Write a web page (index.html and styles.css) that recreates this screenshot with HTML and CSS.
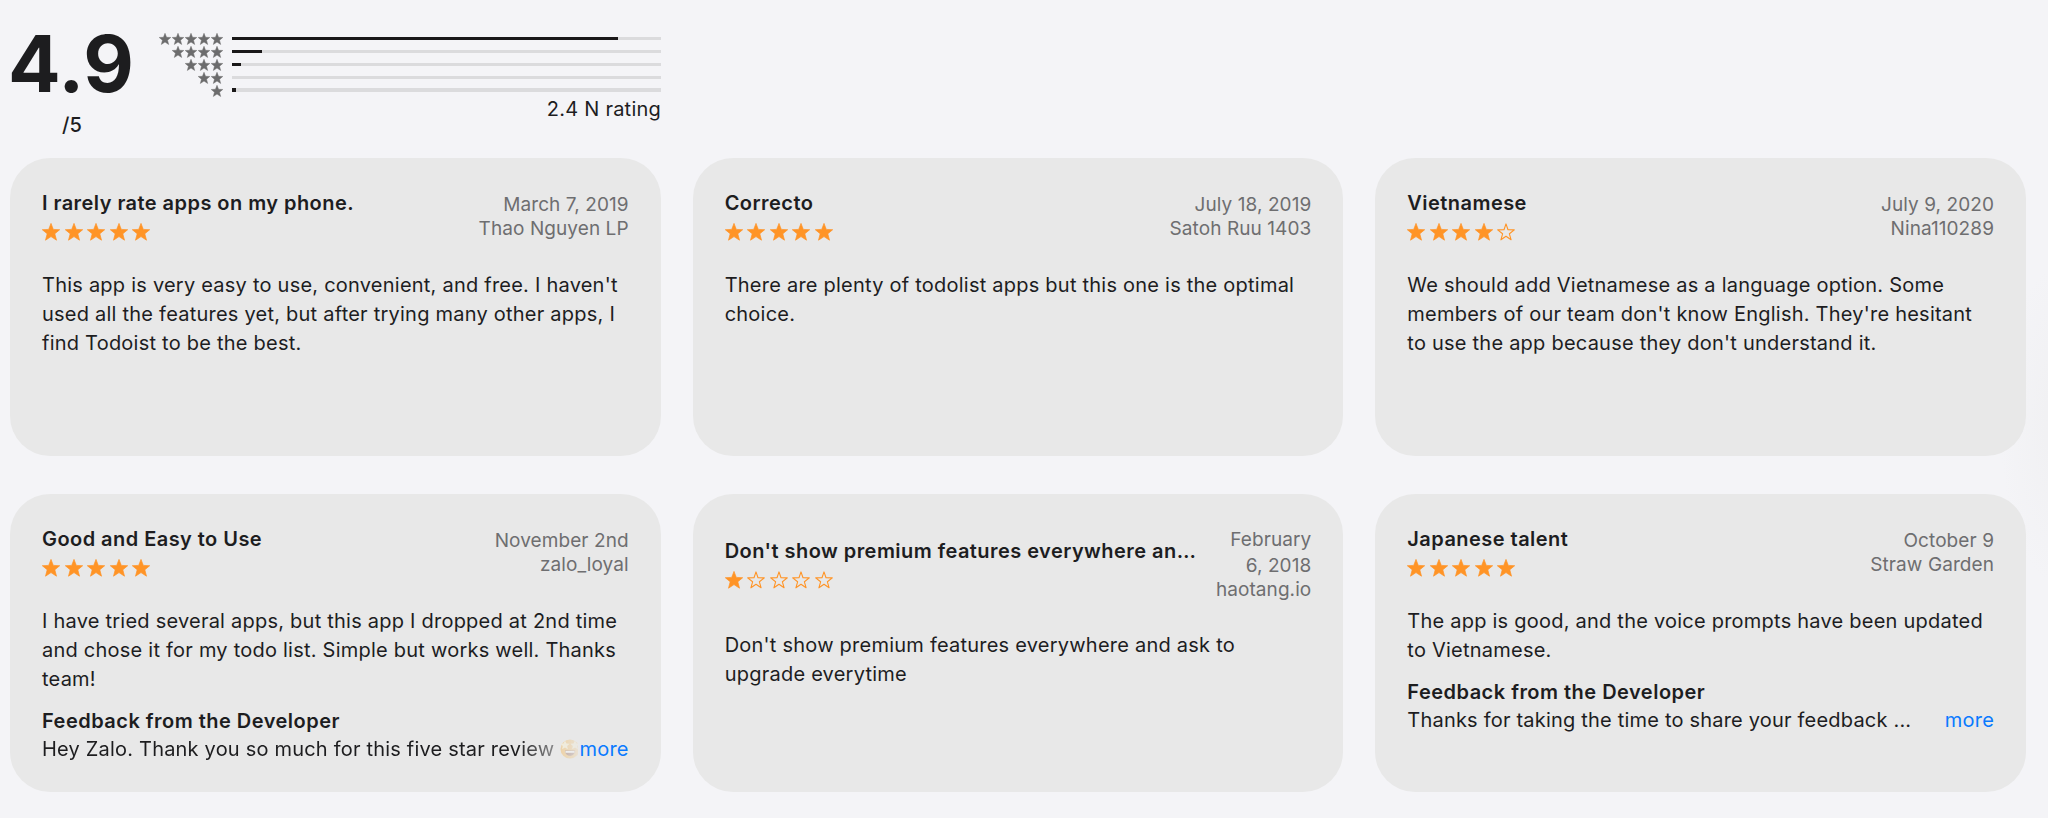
FILE: index.html
```html
<!DOCTYPE html>
<html lang="en">
<head>
    <meta charset="UTF-8">
    <title>Ratings and Reviews</title>
    <link rel="stylesheet" href="styles.css">
</head>
<body>
    <svg class="sprite" aria-hidden="true">
        <symbol id="star" viewBox="0 0 18 18">
            <path stroke="currentColor" stroke-width=".7" stroke-linejoin="round" d="M9 .4 11.3 6.4 17.7 6.7 12.8 10.8 14.5 17.2 9 13.6 3.5 17.2 5.2 10.8 .3 6.7 6.7 6.4Z"/>
        </symbol>
        <symbol id="star-o" viewBox="0 0 18 18">
            <path fill="none" stroke="currentColor" stroke-width="1.1" stroke-linejoin="round" d="M9 .9 11 6.7 17.3 6.9 12.4 10.8 14.1 16.8 9 13.3 3.9 16.8 5.6 10.8 .7 6.9 7 6.7Z"/>
        </symbol>
    </svg>

    <div class="summary">
        <div class="score">
            <div class="score-value">4.9</div>
            <div class="score-max">/5</div>
        </div>
        <div class="histogram">
            <div class="histogram-row">
                <div class="mini-stars"><svg><use href="#star"/></svg><svg><use href="#star"/></svg><svg><use href="#star"/></svg><svg><use href="#star"/></svg><svg><use href="#star"/></svg></div>
                <div class="bar"><div class="bar-fill" style="width: 90%"></div></div>
            </div>
            <div class="histogram-row">
                <div class="mini-stars"><svg><use href="#star"/></svg><svg><use href="#star"/></svg><svg><use href="#star"/></svg><svg><use href="#star"/></svg></div>
                <div class="bar"><div class="bar-fill" style="width: 7%"></div></div>
            </div>
            <div class="histogram-row">
                <div class="mini-stars"><svg><use href="#star"/></svg><svg><use href="#star"/></svg><svg><use href="#star"/></svg></div>
                <div class="bar"><div class="bar-fill" style="width: 2%"></div></div>
            </div>
            <div class="histogram-row">
                <div class="mini-stars"><svg><use href="#star"/></svg><svg><use href="#star"/></svg></div>
                <div class="bar"><div class="bar-fill" style="width: 0%"></div></div>
            </div>
            <div class="histogram-row">
                <div class="mini-stars"><svg><use href="#star"/></svg></div>
                <div class="bar bar-last"><div class="bar-fill" style="width: 1%"></div></div>
            </div>
            <div class="rating-count">2.4 N rating</div>
        </div>
    </div>

    <div class="reviews">
        <div class="card">
            <div class="card-header">
                <div class="heading">
                    <h3>I rarely rate apps on my phone.</h3>
                    <div class="stars"><svg><use href="#star"/></svg><svg><use href="#star"/></svg><svg><use href="#star"/></svg><svg><use href="#star"/></svg><svg><use href="#star"/></svg></div>
                </div>
                <div class="meta">
                    <div class="date">March 7, 2019</div>
                    <div class="author">Thao Nguyen LP</div>
                </div>
            </div>
            <p class="text">This app is very easy to use, convenient, and free. I haven't used all the features yet, but after trying many other apps, I find Todoist to be the best.</p>
        </div>

        <div class="card">
            <div class="card-header">
                <div class="heading">
                    <h3>Correcto</h3>
                    <div class="stars"><svg><use href="#star"/></svg><svg><use href="#star"/></svg><svg><use href="#star"/></svg><svg><use href="#star"/></svg><svg><use href="#star"/></svg></div>
                </div>
                <div class="meta">
                    <div class="date">July 18, 2019</div>
                    <div class="author">Satoh Ruu 1403</div>
                </div>
            </div>
            <p class="text">There are plenty of todolist apps but this one is the optimal choice.</p>
        </div>

        <div class="card">
            <div class="card-header">
                <div class="heading">
                    <h3>Vietnamese</h3>
                    <div class="stars"><svg><use href="#star"/></svg><svg><use href="#star"/></svg><svg><use href="#star"/></svg><svg><use href="#star"/></svg><svg><use href="#star-o"/></svg></div>
                </div>
                <div class="meta">
                    <div class="date">July 9, 2020</div>
                    <div class="author">Nina110289</div>
                </div>
            </div>
            <p class="text">We should add Vietnamese as a language option. Some members of our team don't know English. They're hesitant to use the app because they don't understand it.</p>
        </div>

        <div class="card">
            <div class="card-header">
                <div class="heading">
                    <h3>Good and Easy to Use</h3>
                    <div class="stars"><svg><use href="#star"/></svg><svg><use href="#star"/></svg><svg><use href="#star"/></svg><svg><use href="#star"/></svg><svg><use href="#star"/></svg></div>
                </div>
                <div class="meta">
                    <div class="date">November 2nd</div>
                    <div class="author">zalo_loyal</div>
                </div>
            </div>
            <p class="text">I have tried several apps, but this app I dropped at 2nd time and chose it for my todo list. Simple but works well. Thanks team!</p>
            <h4>Feedback from the Developer</h4>
            <div class="reply">
                <div class="reply-text reply-fade">Hey Zalo. Thank you so much for this five star review <svg class="emoji" viewBox="0 0 20 20">
                    <circle cx="10" cy="10" r="9.5" fill="#f5b040"/>
                    <path d="M5 11.5h10c0 7-10 7-10 0Z" fill="#7d4533"/>
                    <path d="M5.5 12h9v1.8h-9Z" fill="#fff"/>
                    <path d="M5 1.5 6.4 4.5 9.6 4.8 7.2 7 7.9 10.2 5 8.6 2.1 10.2 2.8 7 .4 4.8 3.6 4.5ZM15 1.5 16.4 4.5 19.6 4.8 17.2 7 17.9 10.2 15 8.6 12.1 10.2 12.8 7 10.4 4.8 13.6 4.5Z" fill="#fff3c4"/>
                </svg></div>
                <a class="more">more</a>
            </div>
        </div>

        <div class="card">
            <div class="card-header">
                <div class="heading">
                    <h3>Don't show premium features everywhere an…</h3>
                    <div class="stars"><svg><use href="#star"/></svg><svg><use href="#star-o"/></svg><svg><use href="#star-o"/></svg><svg><use href="#star-o"/></svg><svg><use href="#star-o"/></svg></div>
                </div>
                <div class="meta meta-narrow">
                    <div class="date">February 6, 2018</div>
                    <div class="author">haotang.io</div>
                </div>
            </div>
            <p class="text">Don't show premium features everywhere and ask to upgrade everytime</p>
        </div>

        <div class="card">
            <div class="card-header">
                <div class="heading">
                    <h3>Japanese talent</h3>
                    <div class="stars"><svg><use href="#star"/></svg><svg><use href="#star"/></svg><svg><use href="#star"/></svg><svg><use href="#star"/></svg><svg><use href="#star"/></svg></div>
                </div>
                <div class="meta">
                    <div class="date">October 9</div>
                    <div class="author">Straw Garden</div>
                </div>
            </div>
            <p class="text">The app is good, and the voice prompts have been updated to Vietnamese.</p>
            <h4>Feedback from the Developer</h4>
            <div class="reply">
                <div class="reply-text">Thanks for taking the time to share your feedback ...</div>
                <a class="more">more</a>
            </div>
        </div>
    </div>
</body>
</html>
```

FILE: styles.css
```css
* {
    box-sizing: border-box;
}
body {
    margin: 0;
    padding: 0 22px 0 10px;
    height: 818px;
    overflow: hidden;
    background: radial-gradient(ellipse 60px 160px at 2060px 425px, #f0f0f2, #f4f4f7) #f4f4f7;
    color: #1d1d1f;
    font-family: Inter, "Liberation Sans", sans-serif;
    font-size: 20px;
    letter-spacing: 0.23px;
}
.sprite {
    display: none;
}
h3, h4, p {
    margin: 0;
}

/* summary */
.summary {
    display: flex;
    width: 651px;
    height: 158px;
    padding-top: 17px;
}
.score {
    width: 124px;
    text-align: center;
}
.score-value {
    margin-left: -2px;
    font-size: 78px;
    font-weight: 700;
    line-height: 94px;
    letter-spacing: 0;
}
.score-max {
    line-height: 24px;
    font-weight: 500;
    margin-top: 2px;
}
.histogram {
    flex: 1;
    padding-top: 15px;
}
.histogram-row {
    display: flex;
    align-items: center;
    height: 13px;
}
.mini-stars {
    display: flex;
    justify-content: flex-end;
    gap: 1px;
    width: 88.5px;
    margin-right: 9.5px;
    color: #6c6c6d;
}
.mini-stars svg {
    width: 12px;
    height: 12px;
    fill: #6c6c6d;
}
.bar {
    flex: 1;
    height: 3px;
    background: #dbdbdd;
}
.bar-last {
    height: 4px;
    margin-bottom: 1px;
}
.bar-fill {
    height: 100%;
    background: #1a1819;
}
.rating-count {
    text-align: right;
    line-height: 24px;
}

/* reviews */
.reviews {
    display: grid;
    grid-template-columns: repeat(3, 1fr);
    grid-auto-rows: 298px;
    gap: 38px 32px;
}
.card {
    min-width: 0;
    padding: 33px 32px 0;
    border-radius: 40px;
    background: #e8e8e8;
}
.card-header {
    display: flex;
    align-items: center;
    justify-content: space-between;
    margin-bottom: 28px;
}
.heading {
    min-width: 0;
    height: 52px;
}
.heading h3 {
    font-size: 20px;
    font-weight: 600;
    line-height: 24px;
    letter-spacing: 0.45px;
    white-space: nowrap;
}
.stars {
    display: flex;
    gap: 4.5px;
    margin-top: 7.5px;
    color: #ff9426;
}
.stars svg {
    width: 18px;
    height: 18px;
    fill: #ff9426;
}
.meta {
    flex-shrink: 0;
    padding-bottom: 2px;
    text-align: right;
    font-size: 19px;
    letter-spacing: 0.08px;
    color: #6e6e70;
}
.meta-narrow {
    width: 96px;
}
.date {
    line-height: 26px;
}
.author {
    line-height: 22px;
}
.text {
    line-height: 29px;
}
.card h4 {
    margin-top: 15px;
    font-size: 20px;
    font-weight: 600;
    line-height: 24px;
    letter-spacing: 0.48px;
}
.reply {
    display: flex;
    justify-content: space-between;
    margin-top: 4px;
    line-height: 24px;
    letter-spacing: 0.2px;
}
.reply-text {
    white-space: nowrap;
    overflow: hidden;
}
.reply-fade {
    width: 536px;
    -webkit-mask-image: linear-gradient(to right, #000 475px, transparent 545px);
    mask-image: linear-gradient(to right, #000 475px, transparent 545px);
}
.emoji {
    width: 20px;
    height: 20px;
    vertical-align: -3px;
}
.more {
    color: #0a7aff;
}
```
